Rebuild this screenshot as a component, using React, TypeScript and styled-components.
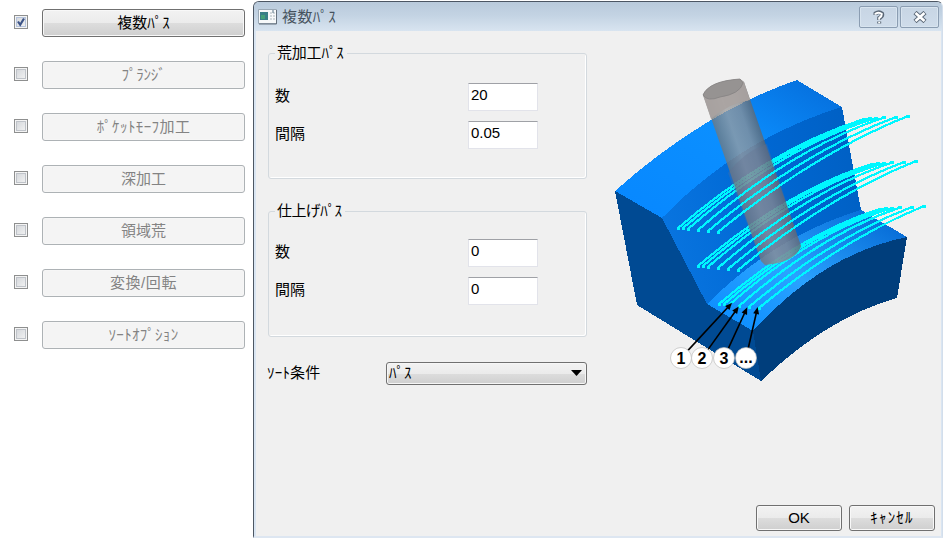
import React from "react";
import styled, { createGlobalStyle } from "styled-components";

const GlobalStyle = createGlobalStyle`
  * { box-sizing: border-box; }
  body {
    margin: 0;
    background: #fff;
    overflow: hidden;
    color: #000;
    font: 15px/20px "Liberation Sans", "Noto Sans CJK JP", sans-serif;
  }
`;

const Screen = styled.div`
  display: flex;
  width: 943px;
  height: 539px;
  overflow: hidden;
`;

const OptionList = styled.div`
  display: flex;
  flex-direction: column;
  gap: 24px;
  width: 253px;
  padding: 9px 0 0 14px;
`;

const OptionRow = styled.div`
  display: flex;
  align-items: center;
  height: 28px;
`;

const CheckBox = styled.span<{ $on?: boolean }>`
  display: flex;
  width: 14px;
  height: 14px;
  margin: -2px 14px 0 0;
  border: 1px solid #8e8f8f;
  background: linear-gradient(135deg, #cfd2d7, #f6f6f6);
  box-shadow: inset 0 0 0 1px #f4f4f4, inset 0 0 0 2px ${(p) => (p.$on ? "#b5c3dc" : "#bfc3c9")};
`;

const activeFace = "linear-gradient(#f2f2f2, #ebebeb 50%, #dddddd 50%, #cfcfcf)";

const OptionButton = styled.button<{ $on?: boolean }>`
  display: flex;
  align-items: center;
  justify-content: center;
  width: 203px;
  height: 28px;
  padding: 0;
  font: inherit;
  border-radius: 3px;
  border: 1px solid ${(p) => (p.$on ? "#707070" : "#adb2b5")};
  color: ${(p) => (p.$on ? "#000" : "#838383")};
  background: ${(p) => (p.$on ? activeFace : "#f4f4f4")};
  box-shadow: inset 0 0 0 1px ${(p) => (p.$on ? "#f8f8f8" : "#f6f6f6")};
`;

const Label = styled.span<{ $track?: number }>`
  white-space: nowrap;
  letter-spacing: ${(p) => p.$track ?? 0}px;
`;

const Dialog = styled.section`
  display: flex;
  flex-direction: column;
  width: 690px;
  height: 537px;
  margin-top: 1px;
  border: 1px solid #4c5663;
  border-right-color: #d3deeb;
  border-bottom: 2px solid #dde6f1;
  border-radius: 6px 6px 0 0;
  background: #d9e5f2;
  padding: 0 1px 0 2px;
`;

const TitleBar = styled.header`
  display: flex;
  align-items: center;
  height: 29px;
  margin: 0 -1px 0 -2px;
  padding: 0 3px 0 4px;
  border-radius: 5px 5px 0 0;
  background: linear-gradient(#b9cadb, #c3d3e3 45%, #d8e4f0);
  color: #46525e;
`;

const Title = styled.h1`
  flex: 1;
  margin: 0 0 0 5px;
  font-size: 15px;
  font-weight: 400;
  letter-spacing: 0.4px;
`;

const CaptionButton = styled.button`
  display: flex;
  justify-content: center;
  align-items: center;
  width: 39px;
  height: 22px;
  margin: 1px 0 0 2px;
  padding: 0;
  border: 1px solid #8b9db2;
  border-radius: 2px;
  background: linear-gradient(#c7d5e4, #cfdcea);
  box-shadow: inset 0 0 0 1px #d8e4ef;
`;

const Content = styled.div`
  display: flex;
  flex: 1;
  background: #f0f0f0;
`;

const Form = styled.div`
  width: 331px;
  padding: 12px 0 0 12px;
`;

const Group = styled.fieldset`
  display: flex;
  flex-direction: column;
  width: 319px;
  height: 136px;
  margin: 0 0 22px;
  padding: 0 0 0 6px;
  border: 1px solid #d3d9de;
  border-radius: 3px;
  box-shadow: inset -1px -1px 0 #fff;
`;

const Legend = styled.legend`
  margin: 0;
  padding: 0 3px 0 2px;
  line-height: 20px;
`;

const Field = styled.div<{ $top?: number }>`
  display: flex;
  align-items: center;
  height: 28px;
  margin-bottom: 10px;
  margin-top: ${(p) => p.$top ?? 0}px;
`;

const FieldName = styled.label`
  width: 193px;
  padding-bottom: 2px;
  line-height: 24px;
`;

const Input = styled.input`
  width: 70px;
  height: 28px;
  padding: 0 0 5px 2px;
  font: inherit;
  border: 1px solid #e2e3ea;
  border-top-color: #9fa1a6;
  background: #fff;
  outline: 0;
`;

const SortRow = styled.div`
  display: flex;
  align-items: center;
  margin-top: 25px;
  height: 23px;
`;

const SortName = styled.span`
  width: 119px;
  margin-left: -1px;
  padding-bottom: 2px;
`;

const Select = styled.div`
  display: flex;
  align-items: center;
  justify-content: space-between;
  width: 201px;
  height: 23px;
  padding: 0 4px 1px 2px;
  border: 1px solid #707070;
  border-radius: 3px;
  background: ${activeFace};
  box-shadow: inset 0 0 0 1px #f6f6f6;
`;

const Side = styled.div`
  display: flex;
  flex-direction: column;
  justify-content: space-between;
  flex: 1;
  padding: 30px 0 5px;
`;

const Buttons = styled.footer`
  display: flex;
  justify-content: flex-end;
  gap: 7px;
  padding-right: 6px;
`;

const PushButton = styled.button`
  display: flex;
  align-items: center;
  justify-content: center;
  width: 86px;
  height: 26px;
  padding: 0;
  font: inherit;
  color: #000;
  border: 1px solid #707070;
  border-radius: 3px;
  background: ${activeFace};
  box-shadow: inset 0 0 0 1px #f8f8f8;
`;

const options = [
  { text: "複数ﾊﾟｽ", on: true, track: 0 },
  { text: "ﾌﾟﾗﾝｼﾞ", track: -0.3 },
  { text: "ﾎﾟｹｯﾄﾓｰﾌ加工", track: 0.4 },
  { text: "深加工", track: 0 },
  { text: "領域荒", track: 0 },
  { text: "変換/回転", track: 0.6 },
  { text: "ｿｰﾄｵﾌﾟｼｮﾝ", track: 0.3 },
];

// Each pass family fans out from its start points to its end points.
const families = [
  { x: 678, y: 228, ex: 864, ey: 119 },
  { x: 698, y: 266, ex: 872, ey: 164 },
  { x: 719, y: 304, ex: 880, ey: 209 },
];
const fan = [
  { s: 0, drop: 0, e: 0, bow: 0.73 },
  { s: 5, drop: 0, e: 6, bow: 0.735 },
  { s: 10, drop: 1, e: 12, bow: 0.74 },
  { s: 20, drop: 2, e: 20, bow: 0.72 },
  { s: 30, drop: 3, e: 32, bow: 0.69 },
  { s: 40, drop: 4, e: 44, bow: 0.67 },
];

function Passes({ from, to }: { from: number; to: number }) {
  return (
    <g fill="none" stroke="#00f7ff" strokeWidth="2.2" shapeRendering="crispEdges">
      {families.flatMap((f, n) =>
        fan.slice(from, to).map((p, k) => {
          const i = from + k;
          const x = f.x + p.s;
          const y = f.y + p.drop;
          const ex = f.ex + p.e;
          const ey = f.ey - (i > 3 ? i - 2 : i / 2);
          const cx = (x + ex) / 2;
          const cy = y + (ey - y) * p.bow;
          return (
            <g key={`${n}-${i}`}>
              <path d={`M${x} ${y}Q${cx} ${cy} ${ex} ${ey}`} />
              <path d={`M${x - 1} ${y}h3M${ex - 2} ${ey}h4`} strokeWidth="3" />
            </g>
          );
        })
      )}
    </g>
  );
}

const markers = [
  { label: "1", x: 681, tx: 730, ty: 305 },
  { label: "2", x: 702, tx: 737, ty: 309 },
  { label: "3", x: 724, tx: 746, ty: 310 },
  { label: "...", x: 746, tx: 757, ty: 310 },
];

function Diagram() {
  return (
    <svg width="354" height="330" viewBox="587 61 354 330">
      <defs>
        <linearGradient id="top" x1="0" y1="1" x2="1" y2="0">
          <stop offset="0" stopColor="#0787ff" />
          <stop offset="0.55" stopColor="#0b8fff" />
          <stop offset="1" stopColor="#056bd8" />
        </linearGradient>
        <linearGradient id="wall" x1="0" y1="0.5" x2="1" y2="0.3">
          <stop offset="0" stopColor="#0874df" />
          <stop offset="0.5" stopColor="#0068d4" />
          <stop offset="1" stopColor="#0060c4" />
        </linearGradient>
        <linearGradient id="step" x1="0" y1="1" x2="1" y2="0">
          <stop offset="0" stopColor="#078aff" />
          <stop offset="0.45" stopColor="#2aa2ff" />
          <stop offset="1" stopColor="#0062cf" />
        </linearGradient>
        <linearGradient id="tool" gradientUnits="userSpaceOnUse" x1="728" y1="174" x2="772" y2="159">
          <stop offset="0" stopColor="#6c7276" />
          <stop offset="0.4" stopColor="#9c9c9c" />
          <stop offset="0.7" stopColor="#8e9093" />
          <stop offset="1" stopColor="#5e6267" />
        </linearGradient>
      </defs>
      <g shapeRendering="crispEdges">
        <path d="M615 191Q704 112 797 80L842 107Q740 138 662 218Z" fill="url(#top)" />
        <path d="M662 218Q740 138 842 107L861 210Q775 236 707 304Z" fill="url(#wall)" />
        <path d="M707 304Q775 236 861 210L907 237Q823 254 753 331Z" fill="url(#step)" />
        <path d="M615 191L662 218L707 304L753 331L761 381L637 305Z" fill="#004a93" />
        <path d="M753 331Q823 254 907 237L897 298Q828 317 761 381Z" fill="#003e7c" />
      </g>
      <Passes from={0} to={3} />
      <path d="M703 95Q709 81 740 79L744 82L801 246Q796 262 765 265L761 261Z" fill="url(#tool)" fillOpacity="0.76" />
      <path d="M703 95Q709 81 740 79L744 82L750 100Q729 103 711 119Z" fill="#aaa3a0" fillOpacity="0.88" />
      <path d="M703 95Q709 81 740 79L743 83Q740 94 720 97Q707 102 703 95Z" fill="#969392" stroke="#858383" strokeWidth="0.8" />
      <path d="M728 173Q745 151 767 144L801 246Q796 262 765 265L761 261Z" fill="#66708f" fillOpacity="0.3" />
      <Passes from={3} to={6} />
      {markers.map((m) => {
        const a = Math.atan2(m.ty - 358, m.tx - m.x);
        return (
          <g key={m.label}>
            <line x1={m.x + 10 * Math.cos(a)} y1={358 + 10 * Math.sin(a)} x2={m.tx} y2={m.ty} stroke="#000" strokeWidth="1.6" />
            <path d="M3 0L-4 -3L-4 3Z" transform={`translate(${m.tx} ${m.ty}) rotate(${(a * 180) / Math.PI})`} />
            <circle cx={m.x} cy="358" r="10.5" fill="#fff" stroke="#bbb" strokeWidth="0.7" />
            <text x={m.x} y={m.label === "..." ? 363 : 364} textAnchor="middle" fontSize="16" fontWeight="700" fontFamily="Liberation Sans, sans-serif">
              {m.label}
            </text>
          </g>
        );
      })}
    </svg>
  );
}

type GroupProps = { title: string; values: string[]; track: number; top: number };

function ParameterGroup({ title, values, track, top }: GroupProps) {
  return (
    <Group>
      <Legend><Label $track={track}>{title}</Label></Legend>
      <Field $top={top}>
        <FieldName>数</FieldName>
        <Input defaultValue={values[0]} />
      </Field>
      <Field>
        <FieldName>間隔</FieldName>
        <Input defaultValue={values[1]} />
      </Field>
    </Group>
  );
}

export default function App() {
  return (
    <>
      <GlobalStyle />
      <Screen>
        <OptionList>
          {options.map((o) => (
            <OptionRow key={o.text}>
              <CheckBox $on={o.on}>
                {o.on && (
                  <svg width="12" height="12" viewBox="0 0 12 12">
                    <path d="M3 5.5L5.2 8.8L9 2.5" fill="none" stroke="#3d5488" strokeWidth="2.2" />
                  </svg>
                )}
              </CheckBox>
              <OptionButton $on={o.on}>
                <Label $track={o.track}>{o.text}</Label>
              </OptionButton>
            </OptionRow>
          ))}
        </OptionList>
        <Dialog>
          <TitleBar>
            <svg width="19" height="17" viewBox="0 0 19 17">
              <path d="M.5 1.5h18v14h-18z" fill="#f7f9fa" stroke="#9aa8b5" />
              <path d="M18.5 2v14H1" fill="none" stroke="#65717d" />
              <path d="M2 4h8v8H2z" fill="#387f86" />
              <path d="M3 7h4v4H3z" fill="#42a078" />
              <path d="M12 5h2M15 5h2M12 8h2M15 8h2M12 11h2M15 11h2" stroke="#aab5bb" />
              <path d="M15 2v3" stroke="#597487" />
            </svg>
            <Title>複数ﾊﾟｽ</Title>
            <CaptionButton aria-label="Help">
              <svg width="12" height="15" viewBox="0 0 12 15" fill="none">
                <path d="M2.5 5V3.5Q6 1 9 3.5Q10 6 6.2 8V10M6.2 11.5v2" stroke="#596675" strokeWidth="4" />
                <path d="M2.5 4.7V3.8Q6 1.5 8.8 4Q9 6 6.2 8V9.7M6.2 11.7v1.6" stroke="#fff" strokeWidth="2" />
              </svg>
            </CaptionButton>
            <CaptionButton aria-label="Close">
              <svg width="14" height="12" viewBox="0 0 14 12">
                <path d="M2 1.5L12 10.5M12 1.5L2 10.5" stroke="#596675" strokeWidth="4.5" />
                <path d="M2.5 2L11.5 10M11.5 2L2.5 10" stroke="#fff" strokeWidth="2.7" />
              </svg>
            </CaptionButton>
          </TitleBar>
          <Content>
            <Form>
              <ParameterGroup title="荒加工ﾊﾟｽ" values={["20", "0.05"]} track={-0.2} top={20} />
              <ParameterGroup title="仕上げﾊﾟｽ" values={["0", "0"]} track={-0.6} top={18} />
              <SortRow>
                <SortName><Label $track={0.2}>ｿｰﾄ条件</Label></SortName>
                <Select>
                  <Label>ﾊﾟｽ</Label>
                  <svg width="11" height="6" viewBox="0 0 11 6"><path d="M0 0h11L5.5 6z" /></svg>
                </Select>
              </SortRow>
            </Form>
            <Side>
              <Diagram />
              <Buttons>
                <PushButton><Label>OK</Label></PushButton>
                <PushButton><Label $track={1.2}>ｷｬﾝｾﾙ</Label></PushButton>
              </Buttons>
            </Side>
          </Content>
        </Dialog>
      </Screen>
    </>
  );
}
